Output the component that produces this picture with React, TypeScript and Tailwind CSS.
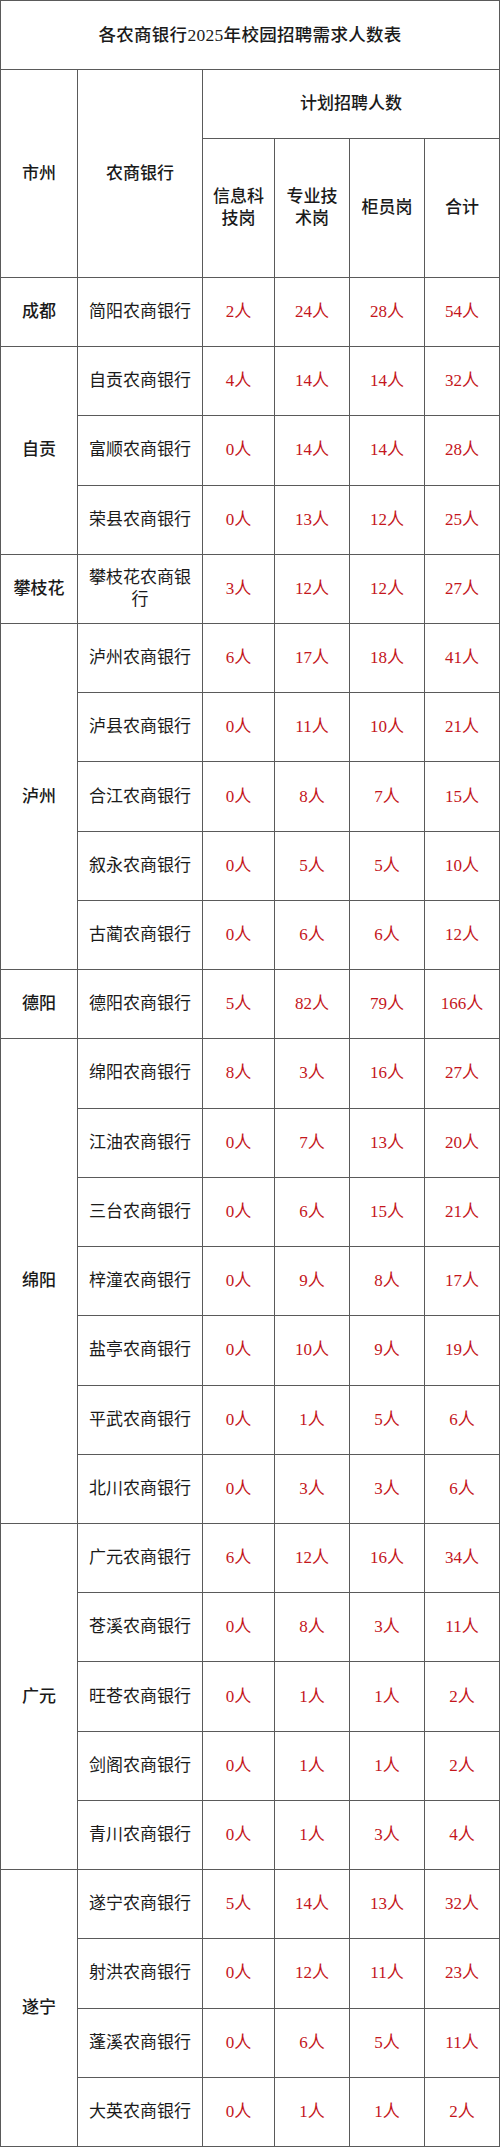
import React from "react";

type Bank = { name: string; v: [number, number, number, number] };
type City = { city: string; banks: Bank[] };

const data: City[] = [
  { city: "成都", banks: [{ name: "简阳农商银行", v: [2, 24, 28, 54] }] },
  {
    city: "自贡",
    banks: [
      { name: "自贡农商银行", v: [4, 14, 14, 32] },
      { name: "富顺农商银行", v: [0, 14, 14, 28] },
      { name: "荣县农商银行", v: [0, 13, 12, 25] },
    ],
  },
  { city: "攀枝花", banks: [{ name: "攀枝花农商银行", v: [3, 12, 12, 27] }] },
  {
    city: "泸州",
    banks: [
      { name: "泸州农商银行", v: [6, 17, 18, 41] },
      { name: "泸县农商银行", v: [0, 11, 10, 21] },
      { name: "合江农商银行", v: [0, 8, 7, 15] },
      { name: "叙永农商银行", v: [0, 5, 5, 10] },
      { name: "古蔺农商银行", v: [0, 6, 6, 12] },
    ],
  },
  { city: "德阳", banks: [{ name: "德阳农商银行", v: [5, 82, 79, 166] }] },
  {
    city: "绵阳",
    banks: [
      { name: "绵阳农商银行", v: [8, 3, 16, 27] },
      { name: "江油农商银行", v: [0, 7, 13, 20] },
      { name: "三台农商银行", v: [0, 6, 15, 21] },
      { name: "梓潼农商银行", v: [0, 9, 8, 17] },
      { name: "盐亭农商银行", v: [0, 10, 9, 19] },
      { name: "平武农商银行", v: [0, 1, 5, 6] },
      { name: "北川农商银行", v: [0, 3, 3, 6] },
    ],
  },
  {
    city: "广元",
    banks: [
      { name: "广元农商银行", v: [6, 12, 16, 34] },
      { name: "苍溪农商银行", v: [0, 8, 3, 11] },
      { name: "旺苍农商银行", v: [0, 1, 1, 2] },
      { name: "剑阁农商银行", v: [0, 1, 1, 2] },
      { name: "青川农商银行", v: [0, 1, 3, 4] },
    ],
  },
  {
    city: "遂宁",
    banks: [
      { name: "遂宁农商银行", v: [5, 14, 13, 32] },
      { name: "射洪农商银行", v: [0, 12, 11, 23] },
      { name: "蓬溪农商银行", v: [0, 6, 5, 11] },
      { name: "大英农商银行", v: [0, 1, 1, 2] },
    ],
  },
];

const spanClass: Record<number, string> = {
  1: "row-span-1",
  2: "row-span-2",
  3: "row-span-3",
  4: "row-span-4",
  5: "row-span-5",
  6: "row-span-6",
  7: "row-span-7",
};

const cell =
  "border-r border-b border-[#5a5a5a] flex items-center justify-center text-center";

export default function App() {
  return (
    <div className="w-[500px] bg-white text-[#1a1a1a]">
      <div
        className="grid grid-cols-[77px_125px_72px_75px_75px_75px] grid-rows-[repeat(31,minmax(0,1fr))] h-[2147px] border-l border-t border-[#5a5a5a] text-[17px] leading-[22px]"
        style={{
          fontFamily: '"Liberation Serif", "Noto Sans CJK SC", serif',
        }}
      >
        <div className={`${cell} col-span-6 font-medium text-[17.5px] tracking-[0.3px]`}>
          各农商银行2025年校园招聘需求人数表
        </div>
        <div className={`${cell} row-span-3 font-medium`}>市州</div>
        <div className={`${cell} row-span-3 font-medium`}>农商银行</div>
        <div className={`${cell} col-span-4 font-medium`}>计划招聘人数</div>
        <div className={`${cell} row-span-2 font-medium`}>
          信息科
          <br />
          技岗
        </div>
        <div className={`${cell} row-span-2 font-medium`}>
          专业技
          <br />
          术岗
        </div>
        <div className={`${cell} row-span-2 font-medium`}>柜员岗</div>
        <div className={`${cell} row-span-2 font-medium`}>合计</div>
        {data.map((c) => (
          <React.Fragment key={c.city}>
            <div className={`${cell} ${spanClass[c.banks.length]} font-medium`}>
              {c.city}
            </div>
            {c.banks.map((b) => (
              <React.Fragment key={b.name}>
                <div className={`${cell} px-[10px]`}>{b.name}</div>
                {b.v.map((n, i) => (
                  <div key={i} className={`${cell} text-[#c4161c]`}>
                    {n}人
                  </div>
                ))}
              </React.Fragment>
            ))}
          </React.Fragment>
        ))}
      </div>
    </div>
  );
}
